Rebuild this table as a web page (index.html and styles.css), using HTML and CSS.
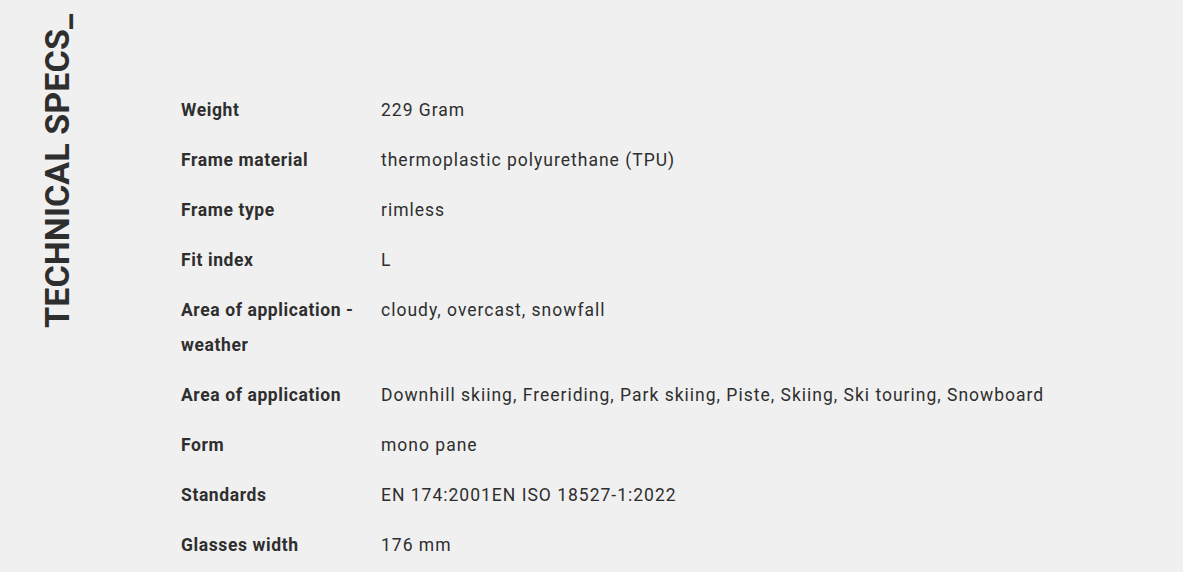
FILE: index.html
```html
<!DOCTYPE html>
<html>
<head>
<meta charset="utf-8">
<link rel="stylesheet" href="styles.css">
</head>
<body>
<section class="specs">
  <div class="title-col"><h2 class="title">TECHNICAL SPECS_</h2></div>
  <dl class="table">
    <div class="row"><dt>Weight</dt><dd>229 Gram</dd></div>
    <div class="row"><dt>Frame material</dt><dd>thermoplastic polyurethane (TPU)</dd></div>
    <div class="row"><dt>Frame type</dt><dd>rimless</dd></div>
    <div class="row"><dt>Fit index</dt><dd>L</dd></div>
    <div class="row"><dt>Area of application - weather</dt><dd>cloudy, overcast, snowfall</dd></div>
    <div class="row"><dt>Area of application</dt><dd>Downhill skiing, Freeriding, Park skiing, Piste, Skiing, Ski touring, Snowboard</dd></div>
    <div class="row"><dt>Form</dt><dd>mono pane</dd></div>
    <div class="row"><dt>Standards</dt><dd>EN 174:2001EN ISO 18527-1:2022</dd></div>
    <div class="row"><dt>Glasses width</dt><dd>176 mm</dd></div>
  </dl>
</section>
</body>
</html>
```
FILE: styles.css
```css
html, body {
  margin: 0;
  padding: 0;
  background: #f0f0f0;
}
body {
  font-family: Roboto, "Liberation Sans", sans-serif;
  color: #2e2e2e;
  overflow: hidden;
}
.specs {
  display: flex;
  height: 572px;
}
.title-col {
  width: 181px;
  flex: none;
  display: flex;
  justify-content: flex-start;
}
.title {
  margin: 16px 0 0 40px;
  writing-mode: vertical-rl;
  transform: rotate(180deg);
  font-size: 34px;
  font-weight: 700;
  letter-spacing: 0.1px;
  line-height: 34px;
  height: 312px;
  text-align: right;
  white-space: nowrap;
}
.table {
  margin: 93px 0 0 0;
  padding: 0;
  display: flex;
  flex-direction: column;
  gap: 15px;
}
.row {
  display: flex;
  line-height: 35px;
  font-size: 17.5px;
}
.row dt {
  width: 200px;
  flex: none;
  font-weight: 700;
  letter-spacing: 0.6px;
  padding-right: 16px;
  box-sizing: border-box;
}
.row dd {
  margin: 0;
  font-weight: 400;
  letter-spacing: 1px;
}
```
